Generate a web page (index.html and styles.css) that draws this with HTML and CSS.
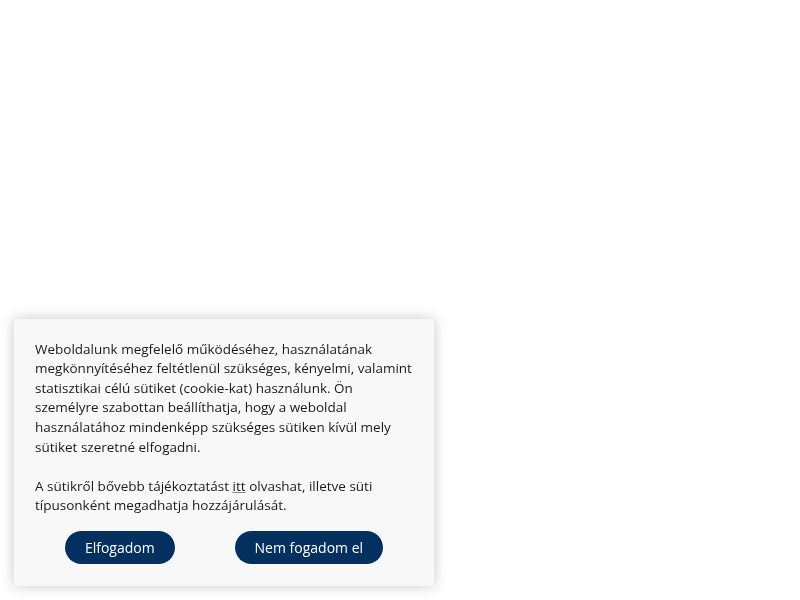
FILE: index.html
```html
<!DOCTYPE html>
<html lang="hu">
<head>
<meta charset="utf-8">
<title>Sütik</title>
<link rel="stylesheet" href="styles.css">
</head>
<body>
<div class="cookie-card">
  <p class="cookie-text">Weboldalunk megfelelő működéséhez, használatának megkönnyítéséhez feltétlenül szükséges, kényelmi, valamint statisztikai célú sütiket (cookie-kat) használunk. Ön személyre szabottan beállíthatja, hogy a weboldal használatához mindenképp szükséges sütiken kívül mely sütiket szeretné elfogadni.</p>
  <p class="cookie-text">A sütikről bővebb tájékoztatást <a href="#" class="cookie-link">itt</a> olvashat, illetve süti típusonként megadhatja hozzájárulását.</p>
  <div class="cookie-actions">
    <button class="cookie-btn">Elfogadom</button>
    <button class="cookie-btn">Nem fogadom el</button>
  </div>
</div>
</body>
</html>
```
FILE: styles.css
```css
html, body {
  margin: 0;
  padding: 0;
  background: #ffffff;
}
body {
  font-family: "Open Sans", "Liberation Sans", sans-serif;
  width: 800px;
  height: 600px;
}
.cookie-card {
  position: fixed;
  left: 14px;
  bottom: 14px;
  width: 420px;
  box-sizing: border-box;
  padding: 21px 21px 22px 21px;
  background: #f8f8f8;
  border-radius: 3px;
  box-shadow: 0 0 14px rgba(0, 0, 0, 0.22);
}
.cookie-text {
  margin: 0 0 19.6px 0;
  font-size: 13.5px;
  line-height: 19.6px;
  color: #1a1a1a;
}
.cookie-text:last-of-type {
  margin-bottom: 15px;
}
.cookie-link {
  color: #1a1a1a;
  text-decoration: underline;
  text-decoration-color: #888;
}
.cookie-actions {
  display: flex;
  justify-content: space-around;
}
.cookie-btn {
  height: 33px;
  padding: 0 20px;
  border: none;
  border-radius: 17px;
  background: #03305f;
  color: #ffffff;
  font-family: "Open Sans", "Liberation Sans", sans-serif;
  font-size: 14px;
}
```
